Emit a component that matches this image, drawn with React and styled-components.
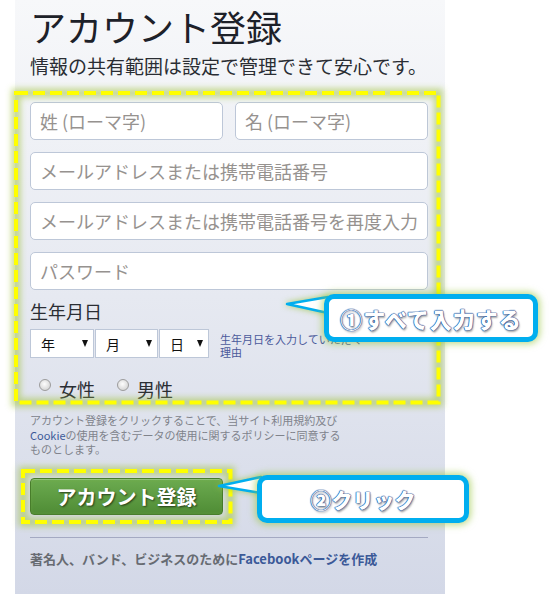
import React from "react";
import styled, { createGlobalStyle } from "styled-components";

const GlobalStyle = createGlobalStyle`
  html, body {
    margin: 0;
    padding: 0;
    background: #fff;
  }
`;

const Page = styled.div`
  position: relative;
  width: 553px;
  height: 594px;
  overflow: hidden;
  background: #fff;
  font-family: "Noto Sans CJK JP", "Noto Sans", sans-serif;
`;

const Panel = styled.main`
  margin-left: 15px;
  width: 430px;
  height: 594px;
  box-sizing: border-box;
  padding: 0 17px 0 15px;
  background: linear-gradient(#f7f8fa, #e6e9f1 50%, #d3d8e7);
  display: flex;
  flex-direction: column;
`;

const Title = styled.h1`
  margin: 0;
  font-size: 36px;
  font-weight: 400;
  line-height: 52px;
  color: #1d2129;
`;

const Subtitle = styled.p`
  margin: 1px 0 0;
  font-size: 19px;
  line-height: 26px;
  color: #2a2d33;
`;

const Form = styled.form`
  position: relative;
  margin-top: 23px;
  display: flex;
  flex-direction: column;
`;

const FieldStack = styled.div`
  display: flex;
  flex-direction: column;
  gap: 12px;
`;

const NameRow = styled.div`
  display: grid;
  grid-template-columns: 1fr 1fr;
  gap: 12px;
`;

const TextField = styled.input`
  width: 100%;
  height: 38px;
  box-sizing: border-box;
  margin: 0;
  padding: 0 9px;
  border: 1px solid #bdc7d8;
  border-radius: 5px;
  background: #fff;
  font-family: inherit;
  font-size: 18px;
  color: #1d2129;
  outline: none;

  &::placeholder {
    color: #96928f;
  }
`;

const BirthLabel = styled.div`
  margin-top: 10px;
  font-size: 18px;
  line-height: 22px;
  color: #2a2d33;
`;

const SelectRow = styled.div`
  margin-top: 7px;
  display: flex;
  align-items: flex-start;
  gap: 1px;
`;

const FakeSelect = styled.div`
  width: ${(p) => p.$w}px;
  height: 29px;
  box-sizing: border-box;
  border: 1px solid #bdc7d8;
  background: #fff;
  display: flex;
  align-items: center;
  justify-content: space-between;
  padding: 0 5px 0 10px;
  font-size: 14px;
  color: #111;
`;

const Caret = styled.span`
  width: 0;
  height: 0;
  border-left: 3.5px solid transparent;
  border-right: 3.5px solid transparent;
  border-top: 7px solid #111;
`;

const HelpText = styled.div`
  margin: 4px 0 0 10px;
  width: 146px;
  font-size: 11px;
  line-height: 13px;
  color: #4b5a9b;
`;

const GenderRow = styled.div`
  margin-top: 19px;
  padding-left: 9px;
  display: flex;
  gap: 22px;
`;

const GenderLabel = styled.label`
  display: flex;
  align-items: flex-start;
  gap: 8px;
  font-size: 18px;
  line-height: 22px;
  color: #2a2d33;
`;

const Radio = styled.input`
  appearance: none;
  width: 12px;
  height: 12px;
  margin: 1px 0 0;
  border-radius: 50%;
  border: 1px solid #9c9c9c;
  background: radial-gradient(circle at 45% 40%, #fdfdfd, #d4d4d4 80%);
  box-sizing: border-box;
`;

const Terms = styled.p`
  margin: 13px 0 0;
  font-size: 11px;
  line-height: 14.5px;
  color: #80838b;
`;

const Link = styled.span`
  color: #3b5998;
`;

const ButtonArea = styled.div`
  position: relative;
  align-self: flex-start;
  margin-top: 21px;
`;

const SubmitButton = styled.button`
  width: 193px;
  height: 37px;
  margin: 0;
  padding: 0;
  border: 1px solid #3d7428;
  border-radius: 4px;
  background: linear-gradient(#6cab50, #4f8c35);
  box-shadow: inset 0 1px 0 rgba(255, 255, 255, 0.25);
  font-family: inherit;
  font-size: 20px;
  font-weight: 700;
  color: #fff;
  text-shadow: 1px 1px 2px rgba(0, 0, 0, 0.6);
`;

const Divider = styled.hr`
  margin: 22px 0 0;
  border: 0;
  height: 1px;
  background: #a4a9c2;
`;

const Footer = styled.p`
  margin: 12px 0 0;
  font-size: 13px;
  font-weight: 700;
  line-height: 18px;
  color: #676b72;
`;

/* annotations drawn over the page */

const FrameSvg = styled.svg`
  position: absolute;
  top: ${(p) => p.$t}px;
  right: ${(p) => p.$r}px;
  bottom: ${(p) => p.$b}px;
  left: ${(p) => p.$l}px;
  width: calc(100% - ${(p) => p.$l + p.$r}px);
  height: calc(100% - ${(p) => p.$t + p.$b}px);
  overflow: visible;
  pointer-events: none;
`;

const DashedFrame = ({ id, t, r, b, l }) => (
  <FrameSvg $t={t} $r={r} $b={b} $l={l}>
    <defs>
      <filter id={id} x="-10%" y="-20%" width="120%" height="140%">
        <feGaussianBlur stdDeviation="3" />
      </filter>
    </defs>
    <rect
      width="100%"
      height="100%"
      fill="none"
      stroke="#a6c646"
      strokeWidth="9"
      opacity="0.6"
      filter={`url(#${id})`}
    />
    <rect
      width="100%"
      height="100%"
      fill="none"
      stroke="#ffff00"
      strokeWidth="4"
      strokeDasharray="12 5"
    />
  </FrameSvg>
);

const CalloutWrap = styled.div`
  position: absolute;
  left: ${(p) => p.$x}px;
  top: ${(p) => p.$y}px;
`;

const Tail = styled.svg`
  position: absolute;
  left: -40px;
  top: 0;
  overflow: visible;
  filter: drop-shadow(0 0 3px rgba(150, 196, 60, 0.8));
`;

const Bubble = styled.div`
  position: relative;
  width: ${(p) => p.$w}px;
  height: 48px;
  box-sizing: border-box;
  border: 5px solid #00aeef;
  border-radius: 10px;
  background: #fff;
  box-shadow: 0 0 7px 2px rgba(150, 196, 60, 0.6);
  display: flex;
  align-items: center;
  justify-content: center;
  font-size: ${(p) => p.$fs}px;
  font-weight: 900;
  letter-spacing: ${(p) => p.$ls}px;
  color: #ffffff;
  text-shadow: 0 0 1px #1f4f9c, 0 0 1px #1f4f9c, 0 0 1px #1f4f9c,
    0 0 1px #1f4f9c, 1px 2px 2px rgba(0, 0, 0, 0.35);
`;

const Callout = ({ x, y, w, fs, ls = 0, tail, children }) => (
  <CalloutWrap $x={x} $y={y}>
    <Tail width="44" height="24">
      <polygon
        points={tail}
        fill="#fff"
        stroke="#00aeef"
        strokeWidth="2.5"
        strokeLinejoin="round"
      />
    </Tail>
    <Bubble $w={w} $fs={fs} $ls={ls}>
      {children}
    </Bubble>
  </CalloutWrap>
);

const App = () => {
  return (
    <Page>
      <GlobalStyle />
      <Panel>
        <Title>アカウント登録</Title>
        <Subtitle>情報の共有範囲は設定で管理できて安心です。</Subtitle>

        <Form onSubmit={(e) => e.preventDefault()}>
          <FieldStack>
            <NameRow>
              <TextField placeholder="姓 (ローマ字)" />
              <TextField placeholder="名 (ローマ字)" />
            </NameRow>
            <TextField placeholder="メールアドレスまたは携帯電話番号" />
            <TextField placeholder="メールアドレスまたは携帯電話番号を再度入力" />
            <TextField type="password" placeholder="パスワード" />
          </FieldStack>

          <BirthLabel>生年月日</BirthLabel>
          <SelectRow>
            <FakeSelect $w={64}>
              年<Caret />
            </FakeSelect>
            <FakeSelect $w={63}>
              月<Caret />
            </FakeSelect>
            <FakeSelect $w={50}>
              日<Caret />
            </FakeSelect>
            <HelpText>生年月日を入力していただく理由</HelpText>
          </SelectRow>

          <GenderRow>
            <GenderLabel>
              <Radio type="radio" name="sex" />
              女性
            </GenderLabel>
            <GenderLabel>
              <Radio type="radio" name="sex" />
              男性
            </GenderLabel>
          </GenderRow>

          <DashedFrame id="glow-form" t={-9.5} r={-10} b={-2} l={-14.5} />
        </Form>

        <Terms>
          アカウント登録をクリックすることで、当サイト利用規約及び
          <br />
          <Link>Cookie</Link>の使用を含むデータの使用に関するポリシーに同意する
          <br />
          ものとします。
        </Terms>

        <ButtonArea>
          <SubmitButton type="button">アカウント登録</SubmitButton>
          <DashedFrame id="glow-btn" t={-6.5} r={-7} b={-7.5} l={-7.5} />
        </ButtonArea>

        <Divider />
        <Footer>
          著名人、バンド、ビジネスのために<Link>Facebookページを作成</Link>
        </Footer>
      </Panel>

      <Callout x={324} y={294} w={214} fs={22} ls={1} tail="3,10 44,3 44,19">
        ①すべて入力する
      </Callout>
      <Callout x={257} y={475} w={212} fs={21} tail="2,11 44,2 44,18">
        ②クリック
      </Callout>
    </Page>
  );
};

export default App;
